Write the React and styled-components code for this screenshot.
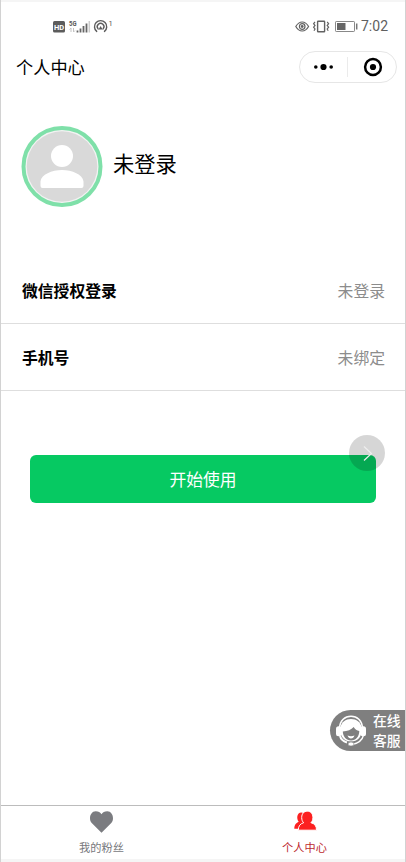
import React from "react";
import styled, { createGlobalStyle } from "styled-components";

const GlobalStyle = createGlobalStyle`
  * { box-sizing: border-box; }
  body {
    margin: 0;
    background: #f5f5f5;
    font-family: "Noto Sans CJK SC", "Noto Sans", sans-serif;
  }
`;

const Screen = styled.div`
  position: relative;
  width: 406px;
  height: 862px;
  display: flex;
  flex-direction: column;
  background: #fff;
  border: solid #d2d2d2;
  border-width: 0 1px;
  overflow: hidden;
`;

const Edge = styled.div`
  flex: none;
  height: ${(p) => p.$size}px;
  background: #f5f5f5;
`;

const StatusBar = styled.header`
  flex: none;
  height: 49px;
  display: flex;
  justify-content: space-between;
  padding: 15px 17px 0 52px;
`;

const StatusGroup = styled.div`
  display: flex;
  height: 18px;
  align-items: center;
`;

const Clock = styled.span`
  width: 27px;
  margin-left: 3px;
  padding-top: 1px;
  font: 14px/19px Roboto, sans-serif;
  color: #606060;
  white-space: nowrap;
`;

const NavBar = styled.nav`
  flex: none;
  height: 32px;
  display: flex;
  justify-content: space-between;
  align-items: center;
  padding: 0 8px 0 15px;
`;

const NavTitle = styled.h1`
  margin: 0;
  font-size: 17.2px;
  line-height: 32px;
  font-weight: 400;
  color: #000;
`;

const Capsule = styled.div`
  width: 98px;
  height: 32px;
  display: flex;
  align-items: center;
  border: 1px solid #e6e6e6;
  border-radius: 16px;
`;

const CapsuleButton = styled.button`
  flex: 1;
  height: 20px;
  display: flex;
  align-items: center;
  justify-content: center;
  padding: 0;
  border: 0;
  background: none;

  & + & {
    border-left: 1px solid #ebebeb;
    padding-left: 1px;
  }
`;

const Profile = styled.section`
  flex: none;
  height: 174px;
  display: flex;
  align-items: flex-start;
  padding: 43px 20px 0;
`;

const Avatar = styled.div`
  width: 82px;
  height: 81px;

  svg { display: block; }
`;

const UserName = styled.div`
  margin: 21px 0 0 10px;
  font-size: 21.3px;
  line-height: 32px;
  color: #000;
`;

const Row = styled.div`
  flex: none;
  height: ${(p) => p.$height}px;
  display: flex;
  justify-content: space-between;
  align-items: center;
  padding: 2px 20px 0 21px;
  border-bottom: 1px solid #dedede;
  font-size: 15.8px;
  line-height: 24px;
`;

const RowLabel = styled.span`
  font-weight: 700;
  color: #000;
`;

const RowValue = styled.span`
  color: #8c8c8c;
`;

const Action = styled.main`
  flex: 1;
  padding: 64px 29px 0;
`;

const StartButton = styled.button`
  display: block;
  width: 346px;
  height: 48px;
  padding: 0;
  border: 0;
  border-radius: 6px;
  background: #06c962;
  color: #fff;
  font: 400 16.8px/48px "Noto Sans CJK SC", sans-serif;
`;

const FloatingArrow = styled.button`
  position: absolute;
  right: 20px;
  top: 435px;
  width: 36px;
  height: 36px;
  padding: 0;
  border: 0;
  border-radius: 50%;
  background: rgba(0, 0, 0, 0.16);

  svg { display: block; }
`;

const Service = styled.aside`
  position: absolute;
  right: -1px;
  top: 710px;
  width: 76px;
  height: 41px;
  display: flex;
  align-items: center;
  padding-left: 5px;
  border-radius: 20.5px 0 0 20.5px;
  background: #7f7f7f;
  color: #fff;
`;

const ServiceText = styled.div`
  width: 30px;
  margin-left: 6px;
  font-size: 13.8px;
  line-height: 19.5px;
  font-weight: 500;
  white-space: nowrap;
`;

const TabBar = styled.footer`
  flex: none;
  height: 54px;
  display: flex;
  border-top: 1px solid #bcbcbc;
`;

const Tab = styled.div`
  flex: 1;
  display: flex;
  flex-direction: column;
  align-items: center;
  padding-top: 4px;
  color: ${(p) => p.$color};
  font-size: 11.2px;
  line-height: 16px;

  &:first-child { padding-right: 1px; }
  &:last-child { padding-left: 1px; }

  svg { display: block; margin-bottom: 5px; }
`;

const SignalIcons = () => (
  <svg width="61" height="18" viewBox="0 0 61 18">
    <rect x="0" y="4" width="12" height="11.5" rx="1.5" fill="#5c5c5c" />
    <text x="6" y="12.7" textAnchor="middle" fontFamily="Roboto" fontWeight="700" fontSize="7.5" fill="#fff">HD</text>
    <text x="16" y="9" fontFamily="Roboto" fontWeight="700" fontSize="7.5" textLength="7.5" lengthAdjust="spacingAndGlyphs" fill="#555">5G</text>
    <path d="M18 15v-4l-1.500 1.500M20.500 11v4l1.500-1.500" fill="none" stroke="#c4c4c4" strokeWidth="1" />
    <path d="M24.500 13.500v2M27.500 11.500v4M30.500 9v6.500M33.500 6.500v9" stroke="#666" strokeWidth="1.800" />
    <path d="M36.300 4v11.500" stroke="#ccc" strokeWidth="1.500" />
    <g fill="none" stroke="#5c5c5c" strokeWidth="1.400" strokeLinecap="round">
      <path d="M43.700 14.400a6.100 6.100 0 1 1 7.800 0M45.100 11.900a3.300 3.300 0 1 1 5 0" />
    </g>
    <path d="M47.600 9l2 3.500h-4z" fill="#5c5c5c" />
    <text x="55.5" y="9" fontFamily="Roboto" fontSize="7.5" fill="#555">1</text>
  </svg>
);

const DeviceIcons = () => (
  <svg width="63" height="18" viewBox="0 0 63 18">
    <g fill="none" stroke="#626262" strokeWidth="1.2">
      <path d="M.8 9.500Q3.500 5 7.200 5T13.600 9.500Q11 14 7.200 14T.8 9.500Z" />
      <circle cx="7.2" cy="9.5" r="2.8" />
      <rect x="22.6" y="4.2" width="7" height="10.6" rx=".5" strokeWidth="1.4" />
      <path d="M20 5l-1.400 1.700L20 8.400l-1.400 1.800L20 12l-1 1.700M32.200 5l1.400 1.700-1.400 1.700 1.400 1.800-1.400 1.800 1 1.700" />
      <rect x="40.5" y="4.500" width="19" height="10" rx=".7" stroke="#888" strokeWidth="1" />
    </g>
    <circle cx="7.2" cy="9.5" r="1.4" fill="#626262" />
    <path d="M42 6h8.500v7H42z" fill="#666" />
    <path d="M61.700 6.500v6" stroke="#777" strokeWidth="1.500" />
  </svg>
);

const PersonIcon = () => (
  <svg width="82" height="81" viewBox="0 0 82 81">
    <circle cx="41" cy="40.500" r="38.500" fill="#f3f3f3" stroke="#7fe0a9" strokeWidth="4" />
    <circle cx="41" cy="40.500" r="35.300" fill="#d9d9d9" />
    <circle cx="41" cy="30" r="11" fill="#fff" />
    <path d="M19.500 62V55.500C20 48.500 31 44 41 44s21 4.500 21.500 11.500V60a2 2 0 0 1-2 2h-39a2 2 0 0 1-2-2Z" fill="#fff" />
  </svg>
);

const AgentIcon = () => (
  <svg width="32" height="32" viewBox="0 0 32 32">
    <path d="M4.500 13C5 5.500 10 1.200 16 1.200S27 5.500 27.500 13" fill="none" stroke="#fff" strokeWidth="1.600" />
    <path d="M5.500 12C6.500 7 10.500 4 16 4S25.500 7 26.500 12v4c0 6-4 10.500-10.500 10.500S5.500 22 5.500 16Z" fill="#fff" />
    <path d="M7.800 16.500c4.700-.2 8.500-1.700 10.900-4.500 1.200 2.200 3.200 3.500 5.600 4-.1 5.500-3.400 9.500-8.200 9.500S7.900 21.500 7.800 16.500Z" fill="#7f7f7f" />
    <path d="M12.500 20.500q3.500 1.500 7 0-1 3-3.500 3t-3.500-3Z" fill="#fff" />
    <path d="M5 21q1 4.500 7 6.500" fill="none" stroke="#fff" strokeWidth="2" />
    <rect x="1" y="11.300" width="5.500" height="10" rx="2.500" fill="#fff" />
    <rect x="25.500" y="11.300" width="5.500" height="10" rx="2.500" fill="#fff" />
    <path d="M28.500 20q-1.500 7.500-11.500 9.500" fill="none" stroke="#fff" strokeWidth="1.300" />
    <ellipse cx="16" cy="29" rx="3" ry="2" fill="#fff" stroke="#7f7f7f" strokeWidth=".6" />
  </svg>
);

const HeartIcon = () => (
  <svg width="24" height="24" viewBox="0 0 24 24">
    <path d="M11.500 22.800 1.500 12.700C-1.700 8.700.500 1.300 5.700 1.300c2.600 0 4.700 1.300 5.800 2.900 1.100-1.600 3.200-2.900 5.800-2.900 5.200 0 7.400 7.400 4.200 11.400Z" fill="#7b7c80" />
  </svg>
);

const PeopleIcon = () => (
  <svg width="24" height="24" viewBox="0 0 24 24">
    <path d="M1.300 18.800c0-4 1.700-5.700 4.400-7.100C3.300 8.500 3.800 2.700 8.300 2.500c1.800 0 3 1 3.700 3v6l-5 7.300Z" fill="#fc2020" />
    <path d="M5.300 20.200c0-4.400 2-6.500 5.400-7.500C9.400 11.600 8.700 9.900 8.700 7.500c0-4 2.400-6.300 5.600-6.300s5.600 2.300 5.600 6.300c0 2.400-.7 4.100-2 5.200 3.800 1 5.600 3.100 5.600 7.500Z" fill="#fc2020" stroke="#fff" strokeWidth="1" />
  </svg>
);

export default function App() {
  return (
    <>
      <GlobalStyle />
      <Screen>
        <Edge $size={2} />
        <StatusBar>
          <StatusGroup><SignalIcons /></StatusGroup>
          <StatusGroup><DeviceIcons /><Clock>7:02</Clock></StatusGroup>
        </StatusBar>
        <NavBar>
          <NavTitle>个人中心</NavTitle>
          <Capsule>
            <CapsuleButton aria-label="更多">
              <svg width="20" height="8" viewBox="0 0 20 8">
                <circle cx="1.800" cy="4" r="1.800" />
                <circle cx="9.500" cy="4" r="3.100" />
                <circle cx="17.200" cy="4" r="1.800" />
              </svg>
            </CapsuleButton>
            <CapsuleButton aria-label="关闭">
              <svg width="20" height="20" viewBox="0 0 20 20">
                <circle cx="10" cy="10" r="7.900" fill="none" stroke="#000" strokeWidth="2.500" />
                <circle cx="10" cy="10" r="3.100" />
              </svg>
            </CapsuleButton>
          </Capsule>
        </NavBar>
        <Profile>
          <Avatar><PersonIcon /></Avatar>
          <UserName>未登录</UserName>
        </Profile>
        <Row $height={67}>
          <RowLabel>微信授权登录</RowLabel>
          <RowValue>未登录</RowValue>
        </Row>
        <Row $height={67}>
          <RowLabel>手机号</RowLabel>
          <RowValue>未绑定</RowValue>
        </Row>
        <Action>
          <StartButton>开始使用</StartButton>
        </Action>
        <TabBar>
          <Tab $color="#77787c"><HeartIcon />我的粉丝</Tab>
          <Tab $color="#bd292e"><PeopleIcon />个人中心</Tab>
        </TabBar>
        <Edge $size={3} />
        <FloatingArrow aria-label="下一步">
          <svg width="36" height="36" viewBox="0 0 36 36">
            <path d="m15 11.500 7.500 7-7.500 7" fill="none" stroke="#eee" strokeWidth="1.200" />
          </svg>
        </FloatingArrow>
        <Service>
          <AgentIcon />
          <ServiceText>在线<br />客服</ServiceText>
        </Service>
      </Screen>
    </>
  );
}
